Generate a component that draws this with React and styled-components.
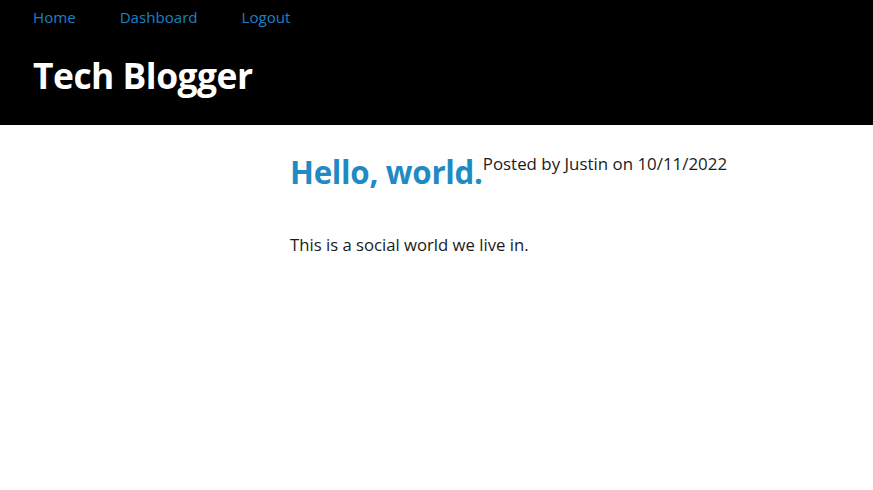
import React from 'react'
import styled, { createGlobalStyle } from 'styled-components'

const GlobalStyle = createGlobalStyle`
	body {
		margin: 0;
		font-family: "Open Sans", "Noto Sans", sans-serif;
		color: #1b1b1b;
		background: #fff;
	}
`

const Header = styled.header`
	background: #000;
	height: 125px;
	padding: 0 33px;
	box-sizing: border-box;
	display: flex;
	flex-direction: column;
`

const Nav = styled.nav`
	display: flex;
	gap: 44px;
	padding-top: 6px;
	height: 22px;
	align-items: center;
`

const NavLink = styled.a`
	color: #1b80c4;
	font-size: 15.1px;
	text-decoration: none;
`

const Title = styled.h1`
	margin: 0;
	margin-top: 27px;
	color: #fff;
	font-size: 35.4px;
	font-weight: 700;
	letter-spacing: -0.5px;
	line-height: 40px;
`

const Main = styled.main`
	display: grid;
	grid-template-columns: 290px 1fr;
	padding-top: 26px;
`

const Post = styled.article`
	grid-column: 2;
`

const PostHead = styled.div`
	display: flex;
	align-items: flex-start;
`

const PostTitle = styled.h2`
	margin: 0;
	color: #1f8ac3;
	font-size: 31.3px;
	font-weight: 700;
	line-height: 42px;
	letter-spacing: -0.3px;
`

const Meta = styled.span`
	font-size: 16.9px;
	line-height: 26px;
`

const Body = styled.p`
	margin: 40px 0 0;
	font-size: 16.7px;
`

const App = () => {
	return (
		<>
			<GlobalStyle />
			<Header>
				<Nav>
					<NavLink href='#'>Home</NavLink>
					<NavLink href='#'>Dashboard</NavLink>
					<NavLink href='#'>Logout</NavLink>
				</Nav>
				<Title>Tech Blogger</Title>
			</Header>
			<Main>
				<Post>
					<PostHead>
						<PostTitle>Hello, world.</PostTitle>
						<Meta>Posted by Justin on 10/11/2022</Meta>
					</PostHead>
					<Body>This is a social world we live in.</Body>
				</Post>
			</Main>
		</>
	)
}

export default App
